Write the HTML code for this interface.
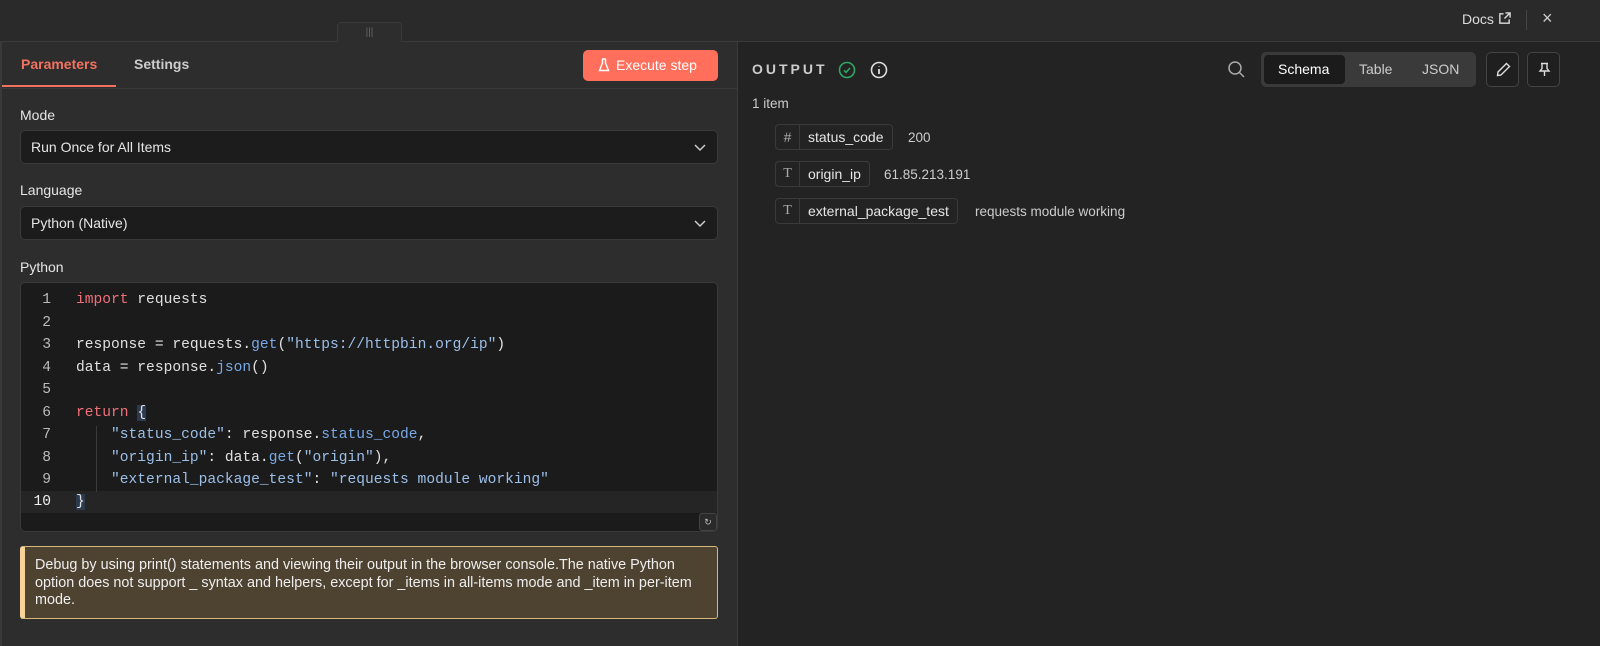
<!DOCTYPE html><html><head><style>
*{box-sizing:border-box;margin:0;padding:0}
body{width:1600px;height:646px;background:#2b2b2b;font-family:"Liberation Sans",sans-serif;color:#ddd;position:relative;overflow:hidden;font-size:14px}
.abs{position:absolute}
.top{left:0;top:0;width:1600px;height:42px;background:#2a2a2a;border-bottom:1px solid #3a3a3a}
.left{left:0;top:42px;width:737px;height:604px;background:#2d2d2d;border-left:2px solid #3a3a3a}
.right{left:737px;top:42px;width:863px;height:604px;background:#232323;border-left:1px solid #3a3a3a}
.sel{left:20px;width:698px;height:34px;background:#1c1c1c;border:1px solid #3a3a3a;border-radius:5px;padding:0 10px;line-height:32px;font-size:14px;color:#e6e6e6}
.lbl{left:20px;font-size:14px;color:#e6e6e6}
.code{left:20px;top:282px;width:698px;height:250px;background:#1b1b1b;border:1px solid #3a3a3a;border-radius:5px;overflow:hidden}
.ln{position:absolute;left:0;width:30px;text-align:right;font-family:"Liberation Mono",monospace;font-size:14.6px;color:#bbb}
.cl{position:absolute;left:55px;font-family:"Liberation Mono",monospace;font-size:14.6px;color:#e0e0e0;white-space:pre}
.k{color:#f0707a}.f{color:#78a8e6}.s{color:#9cbfe8}
.pill{height:26px;border:1px solid #3a3a3a;border-radius:4px;display:flex;align-items:center;font-size:14px;color:#e6e6e6}
.pill i{font-style:normal;width:24px;text-align:center;color:#aaa;border-right:1px solid #3a3a3a;height:100%;line-height:24px}
.pill span{padding:0 8px}
</style></head><body>
<div class="abs top"></div>
<div class="abs" style="left:337px;top:22px;width:65px;height:21px;background:#2d2d2d;border:1px solid #3a3a3a;border-bottom:none;border-radius:4px 4px 0 0;text-align:center;color:#666;font-size:10px;line-height:20px">|||</div>
<div class="abs" style="left:1462px;top:11px;font-size:14px;color:#ddd">Docs <svg width="13" height="13" viewBox="0 0 14 14" style="vertical-align:-1px"><path d="M6 2H2v10h10V8M8 1h5v5M13 1L7 7" stroke="#ddd" fill="none" stroke-width="1.5"/></svg></div>
<div class="abs" style="left:1526px;top:10px;width:1px;height:20px;background:#444"></div>
<div class="abs" style="left:1542px;top:8px;font-size:18px;color:#ccc">×</div>

<div class="abs left"></div>
<div class="abs" style="left:21px;top:56px;color:#f2725f;font-size:14px;font-weight:bold">Parameters</div>
<div class="abs" style="left:2px;top:85px;width:114px;height:2px;background:#f2725f"></div>
<div class="abs" style="left:134px;top:56px;color:#ccc;font-size:14px;font-weight:bold">Settings</div>
<div class="abs" style="left:2px;top:88px;width:735px;height:1px;background:#3a3a3a"></div>
<div class="abs" style="left:583px;top:50px;width:135px;height:31px;background:#ff6f5c;border-radius:5px;color:#fff;font-size:14px;line-height:31px;padding-left:15px">
<svg width="12" height="14" viewBox="0 0 12 14" style="vertical-align:-2px;margin-right:6px"><path d="M4 1h4M4.5 1v4L1.5 12.5h9L7.5 5V1" stroke="#fff" fill="none" stroke-width="1.4"/></svg>Execute step</div>

<div class="abs lbl" style="top:107px">Mode</div>
<div class="abs sel" style="top:130px">Run Once for All Items<svg class="abs" style="right:10px;top:11px" width="14" height="10" viewBox="0 0 14 10"><path d="M2 3l5 5 5-5" stroke="#ccc" fill="none" stroke-width="1.5"/></svg></div>
<div class="abs lbl" style="top:182px">Language</div>
<div class="abs sel" style="top:206px">Python (Native)<svg class="abs" style="right:10px;top:11px" width="14" height="10" viewBox="0 0 14 10"><path d="M2 3l5 5 5-5" stroke="#ccc" fill="none" stroke-width="1.5"/></svg></div>
<div class="abs lbl" style="top:259px">Python</div>

<div class="abs code">
<div class="abs" style="left:0;top:208px;width:698px;height:22px;background:#252525"></div>
<div class="abs" style="left:75px;top:143px;width:1px;height:66px;background:#3a3a3a"></div>
<div class="ln" style="top:9px">1</div><div class="cl" style="top:9px"><span class="k">import</span> requests</div>
<div class="ln" style="top:32px">2</div>
<div class="ln" style="top:54px">3</div><div class="cl" style="top:54px">response = requests.<span class="f">get</span>(<span class="s">"https://httpbin.org/ip"</span>)</div>
<div class="ln" style="top:77px">4</div><div class="cl" style="top:77px">data = response.<span class="f">json</span>()</div>
<div class="ln" style="top:99px">5</div>
<div class="ln" style="top:122px">6</div><div class="cl" style="top:122px"><span class="k">return</span> <span style="background:#2c3a50">{</span></div>
<div class="ln" style="top:144px">7</div><div class="cl" style="top:144px">    <span class="s">"status_code"</span>: response.<span class="f">status_code</span>,</div>
<div class="ln" style="top:167px">8</div><div class="cl" style="top:167px">    <span class="s">"origin_ip"</span>: data.<span class="f">get</span>(<span class="s">"origin"</span>),</div>
<div class="ln" style="top:189px">9</div><div class="cl" style="top:189px">    <span class="s">"external_package_test"</span>: <span class="s">"requests module working"</span></div>
<div class="ln" style="top:211px;color:#eee">10</div><div class="cl" style="top:211px"><span style="background:#2c3a50">}</span></div>
<div class="abs" style="right:0;bottom:0;width:18px;height:18px;background:#2a2a2a;border:1px solid #444;border-radius:3px;font-size:9px;color:#bbb;text-align:center;line-height:16px">↻</div>
</div>

<div class="abs" style="left:20px;top:546px;width:698px;height:73px;background:#4e4230;border:1px solid #d8b77a;border-left:5px solid #f5d39a;border-radius:3px;padding:10px 8px 0 10px;font-size:14.4px;line-height:17.5px;color:#eee">Debug by using print() statements and viewing their output in the browser console.The native Python option does not support _ syntax and helpers, except for _items in all-items mode and _item in per-item mode.</div>

<div class="abs right"></div>
<div class="abs" style="left:752px;top:61px;font-size:14px;letter-spacing:3px;color:#ccc;font-weight:bold">OUTPUT</div>
<svg class="abs" style="left:838px;top:61px" width="18" height="18" viewBox="0 0 18 18"><circle cx="9" cy="9" r="7.5" stroke="#2fa665" stroke-width="1.6" fill="none"/><path d="M6 9.3l2 2 4-4.3" stroke="#2fa665" stroke-width="1.6" fill="none"/></svg>
<svg class="abs" style="left:870px;top:61px" width="18" height="18" viewBox="0 0 18 18"><circle cx="9" cy="9" r="7.5" stroke="#ddd" stroke-width="1.6" fill="none"/><path d="M9 8v5M9 5.2v.6" stroke="#ddd" stroke-width="1.8"/></svg>
<svg class="abs" style="left:1227px;top:60px" width="18" height="18" viewBox="0 0 18 18"><circle cx="8" cy="8" r="6" stroke="#aaa" stroke-width="1.5" fill="none"/><path d="M12.5 12.5L17 17" stroke="#aaa" stroke-width="1.5"/></svg>
<div class="abs" style="left:1261px;top:52px;width:215px;height:35px;background:#3a3a3a;border-radius:5px"></div>
<div class="abs" style="left:1264px;top:55px;width:81px;height:29px;background:#1b1b1b;border-radius:4px"></div>
<div class="abs" style="left:1278px;top:61px;font-size:14px;color:#fff">Schema</div>
<div class="abs" style="left:1359px;top:61px;font-size:14px;color:#ccc">Table</div>
<div class="abs" style="left:1422px;top:61px;font-size:14px;color:#ccc">JSON</div>
<div class="abs" style="left:1486px;top:52px;width:33px;height:35px;border:1px solid #444;border-radius:5px;background:#1f1f1f"><svg style="margin:9px" width="15" height="15" viewBox="0 0 15 15"><path d="M10.5 1.5l3 3-8.5 8.5L1.5 13.5l.5-3.5z" stroke="#ddd" fill="none" stroke-width="1.4"/></svg></div>
<div class="abs" style="left:1527px;top:52px;width:33px;height:35px;border:1px solid #444;border-radius:5px;background:#1f1f1f"><svg style="margin:9px" width="15" height="15" viewBox="0 0 15 15"><path d="M4 1.5h7M5 1.5v5L3 9h9L10 6.5v-5M7.5 9v5" stroke="#ddd" fill="none" stroke-width="1.4"/></svg></div>
<div class="abs" style="left:752px;top:96px;font-size:13.5px;color:#ccc">1 item</div>
<div class="abs pill" style="left:775px;top:124px"><i>#</i><span>status_code</span></div><div class="abs" style="left:908px;top:130px;font-size:13.5px;color:#ccc">200</div>
<div class="abs pill" style="left:775px;top:161px"><i style="font-family:'Liberation Serif',serif">T</i><span>origin_ip</span></div><div class="abs" style="left:884px;top:167px;font-size:13.5px;color:#ccc">61.85.213.191</div>
<div class="abs pill" style="left:775px;top:198px"><i style="font-family:'Liberation Serif',serif">T</i><span>external_package_test</span></div><div class="abs" style="left:975px;top:204px;font-size:13.5px;color:#ccc">requests module working</div>
</body></html>
